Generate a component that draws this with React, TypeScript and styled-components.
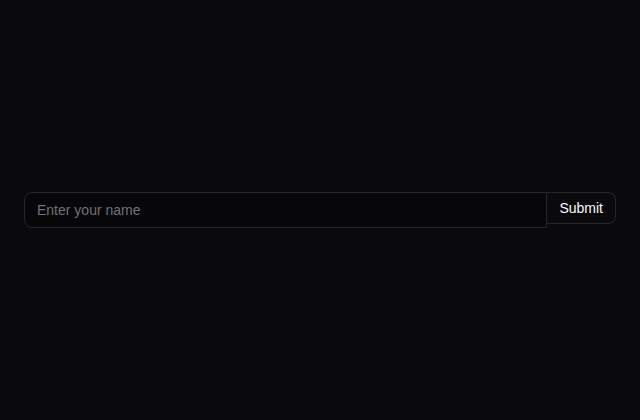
import styled, { createGlobalStyle } from 'styled-components';

const GlobalStyle = createGlobalStyle`
  html, body {
    margin: 0;
    padding: 0;
    background-color: #0a0a0c;
  }
  body {
    font-family: "Liberation Sans", Arial, sans-serif;
  }
`;

const Page = styled.div`
  width: 100%;
  height: 420px;
  display: flex;
  align-items: center;
  padding: 0 24px;
  box-sizing: border-box;
  background-color: #0a0a0c;
`;

const Form = styled.form`
  flex: 1;
  display: flex;
  align-items: flex-start;
`;

const NameInput = styled.input`
  flex: 1;
  height: 36px;
  box-sizing: border-box;
  padding: 0 12px;
  background-color: #070709;
  border: 1px solid #27272a;
  border-radius: 8px 0 0 8px;
  color: #fafafa;
  font-family: "Liberation Sans", Arial, sans-serif;
  font-size: 14px;
  outline: none;
  &::placeholder {
    color: #71717a;
  }
`;

const SubmitButton = styled.button`
  height: 32px;
  box-sizing: border-box;
  padding: 0 12px;
  background-color: #0a0a0c;
  border: 1px solid #27272a;
  border-left: none;
  border-radius: 0 8px 8px 0;
  color: #fafafa;
  font-family: "Liberation Sans", Arial, sans-serif;
  font-size: 14px;
  font-weight: 500;
  cursor: pointer;
`;

export default function App() {
  return (
    <>
      <GlobalStyle />
      <Page>
        <Form onSubmit={(e) => e.preventDefault()}>
          <NameInput type="text" placeholder="Enter your name" />
          <SubmitButton type="submit">Submit</SubmitButton>
        </Form>
      </Page>
    </>
  );
}
